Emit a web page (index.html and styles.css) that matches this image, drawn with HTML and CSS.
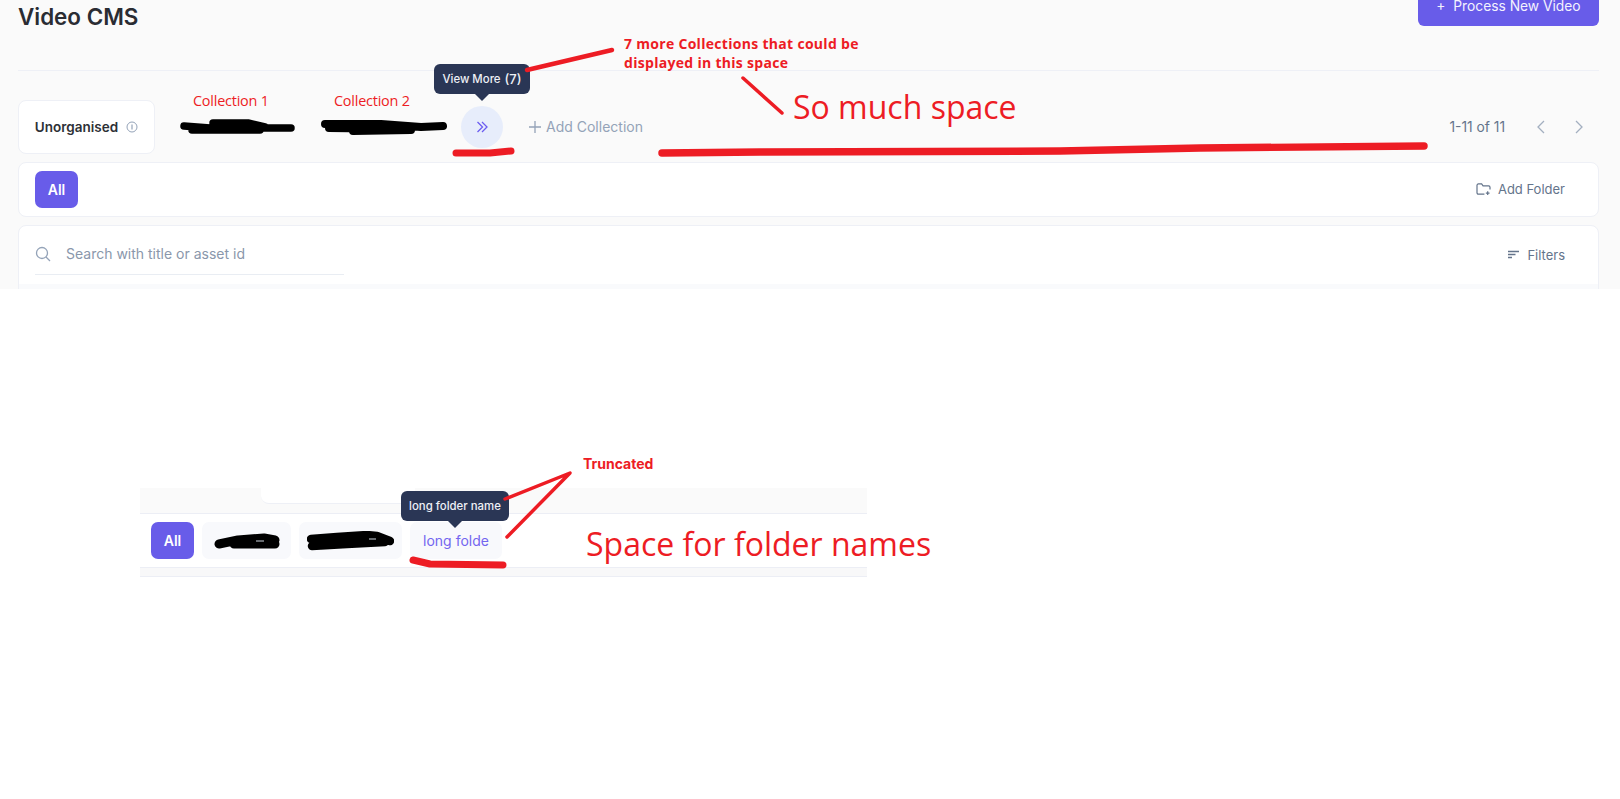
FILE: index.html
```html
<!DOCTYPE html>
<html lang="en">
<head>
    <meta charset="UTF-8">
    <meta name="viewport" content="width=device-width, initial-scale=1.0">
    <title>Video CMS</title>
    <link rel="stylesheet" href="styles.css">
</head>
<body>

    <div class="panel">
        <div class="page-head">
            <h1>Video CMS</h1>
            <button class="btn-primary">+&nbsp; Process New Video</button>
        </div>

        <div class="collections">
            <div class="tab-card">
                Unorganised
                <svg class="info" viewBox="0 0 12 12" width="12" height="12"><circle cx="6" cy="6" r="5" fill="none" stroke="#94a3b8"/><path d="M6 3.5v5" stroke="#94a3b8" stroke-width="1.2"/></svg>
            </div>
            <div class="tab tab-one"><svg class="scribble" width="115" height="16" viewBox="0 0 115 16"><path d="M4 7L30 9L111 9M33 4L68 4L85 8M12 11L80 11" fill="none" stroke="#000" stroke-width="7.500" stroke-linecap="round" stroke-linejoin="round"/></svg></div>
            <div class="tab tab-two"><svg class="scribble" width="126" height="16" viewBox="0 0 126 16"><path d="M4 4L60 4L100 7L122 6M8 8L90 9M32 11L90 10" fill="none" stroke="#000" stroke-width="8" stroke-linecap="round" stroke-linejoin="round"/></svg></div>
            <div class="more">
                <span class="tooltip tooltip-more">View More <b>(7)</b></span>
                <svg viewBox="0 0 14 14" width="14" height="14"><path d="M2.5 2l5 5-5 5M7 2l5 5-5 5" fill="none" stroke="#6b5cf0" stroke-width="1.3"/></svg>
            </div>
            <div class="add-collection">
                <svg viewBox="0 0 12 12" width="12" height="12"><path d="M6 0v12M0 6h12" stroke="#94a3b8" stroke-width="1.300"/></svg>
                Add Collection
            </div>
            <div class="pager">
                <span>1-11 of 11</span>
                <svg viewBox="0 0 10 16" width="10" height="16"><path d="M8 2L2 8l6 6" fill="none" stroke="#a3afc0" stroke-width="1.300"/></svg>
                <svg viewBox="0 0 10 16" width="10" height="16"><path d="M2 2l6 6-6 6" fill="none" stroke="#a3afc0" stroke-width="1.300"/></svg>
            </div>
        </div>

        <div class="folders">
            <button class="chip-all">All</button>
            <div class="link-btn">
                <svg viewBox="0 0 16 14" width="15" height="13"><path d="M9 12H2.500A1.500 1.500 0 0 1 1 10.500V2.500A1.500 1.500 0 0 1 2.500 1H6l1.500 2h6A1.500 1.500 0 0 1 15 4.500V7M12.500 9v4M10.500 11h4" fill="none" stroke="#64748b" stroke-width="1.300"/></svg>
                Add Folder
            </div>
        </div>

        <div class="search-card">
            <div class="search-row">
                <div class="search">
                    <svg viewBox="0 0 16 16" width="16" height="16"><circle cx="7" cy="7" r="5.500" fill="none" stroke="#94a3b8" stroke-width="1.300"/><path d="M11 11l4 4" stroke="#94a3b8" stroke-width="1.300"/></svg>
                    <span>Search with title or asset id</span>
                </div>
                <div class="link-btn">
                    <svg viewBox="0 0 12 10" width="12" height="10"><path d="M0 1.500h11M0 4.500h7.500M0 7.500h4" stroke="#64748b" stroke-width="1.300"/></svg>
                    Filters
                </div>
            </div>
            <div class="search-foot"></div>
        </div>
    </div>

    <div class="panel-small">
        <div class="small-top"><div class="small-card"></div></div>
        <div class="small-row">
            <button class="chip-all">All</button>
            <div class="chip chip-one"><svg class="scribble" width="66" height="16" viewBox="0 0 66 16"><path d="M5 11L24 7L50 5L61 7M20 11L61 11" fill="none" stroke="#000" stroke-width="9" stroke-linecap="round" stroke-linejoin="round"/><path d="M42 8h8" stroke="#8a8f96" stroke-width="1.500"/></svg></div>
            <div class="chip chip-two"><svg class="scribble" width="87" height="20" viewBox="0 0 87 20"><path d="M4 8L30 6L60 4L70 5L83 10M5 15L40 13L78 11" fill="none" stroke="#000" stroke-width="8.500" stroke-linecap="round" stroke-linejoin="round"/><path d="M62 8h7" stroke="#8a8f96" stroke-width="1.500"/></svg></div>
            <div class="chip chip-long">
                <span class="tooltip tooltip-folder">long folder name</span>
                long folde
            </div>
        </div>
        <div class="small-foot"></div>
    </div>

    <!-- anotaciones encima de la captura -->
    <svg class="strokes" viewBox="0 0 1620 799" width="1620" height="799">
        <g fill="none" stroke="#ed1c24" stroke-linecap="round" stroke-linejoin="round">
            <path d="M527 70L612 50" stroke-width="4.500"/>
            <path d="M743 78L782 113" stroke-width="3.500"/>
            <path d="M456 153L490 153L511 151" stroke-width="7"/>
            <path d="M662 153L760 152L1060 151L1200 148L1424 146" stroke-width="7.500"/>
            <path d="M505 499L570 473L507 537" stroke-width="3.500"/>
            <path d="M413 560L430 564L503 565" stroke-width="7"/>
        </g>
    </svg>
    <span class="note note-c1">Collection 1</span>
    <span class="note note-c2">Collection 2</span>
    <span class="note note-more">7 more Collections that could be<br>displayed in this space</span>
    <span class="note note-space">So much space</span>
    <span class="note note-trunc">Truncated</span>
    <span class="note note-folder">Space for folder names</span>

</body>
</html>
```

FILE: styles.css
```css
body {
    font-family: Inter, "Liberation Sans", sans-serif;
    background-color: #fff;
    color: #1f2430;
    margin: 0;
    width: 1620px;
    height: 799px;
    overflow: hidden;
    position: relative;
}

button {
    font-family: inherit;
    border: none;
    cursor: pointer;
}

.panel {
    background-color: #fafafa;
    height: 289px;
    padding: 0 21px 0 18px;
    box-sizing: border-box;
    overflow: hidden;
}

.page-head {
    display: flex;
    justify-content: space-between;
    height: 70px;
    border-bottom: 1px solid #eef0f6;
}

.page-head h1 {
    font-size: 22.400px;
    font-weight: 600;
    line-height: 34px;
    margin: 0;
    color: #2a2c33;
}

.btn-primary {
    background-color: #685ce9;
    color: #f3f2fe;
    font-size: 13.800px;
    font-weight: 400;
    width: 181px;
    height: 40px;
    margin-top: -14px;
    border-radius: 6px;
}

.collections {
    display: flex;
    align-items: center;
    height: 54px;
    margin-top: 29px;
}

.tab-card {
    display: flex;
    align-items: center;
    justify-content: center;
    gap: 8px;
    width: 137px;
    height: 54px;
    box-sizing: border-box;
    background-color: #fff;
    border: 1px solid #eef0f6;
    border-radius: 8px;
    font-size: 13.500px;
    font-weight: 600;
    color: #2d3036;
}

.info {
    flex: none;
}

.tab {
    display: flex;
    align-items: center;
    height: 16px;
}

.tab-one {
    margin-left: 25px;
}

.tab-two {
    margin-left: 26px;
    margin-top: 2px;
}

.more {
    position: relative;
    display: flex;
    align-items: center;
    justify-content: center;
    width: 42px;
    height: 42px;
    margin-left: 14px;
    border-radius: 50%;
    background-color: #e7edfb;
}

.tooltip {
    position: absolute;
    background-color: #2a3655;
    color: #eef0f6;
    font-size: 11.400px;
    font-weight: 500;
    border-radius: 6px;
    white-space: nowrap;
    box-sizing: border-box;
    display: flex;
    align-items: center;
    justify-content: center;
}

.tooltip::after {
    content: "";
    position: absolute;
    bottom: -7px;
    border-left: 7px solid transparent;
    border-right: 7px solid transparent;
    border-top: 7px solid #2a3655;
}

.tooltip-more {
    left: -27px;
    top: -42px;
    width: 96px;
    height: 30px;
    gap: 4px;
}

.tooltip-more b {
    font-size: 13px;
    font-weight: 500;
}

.add-collection {
    display: flex;
    align-items: center;
    gap: 5px;
    margin-left: 26px;
    padding-bottom: 1px;
    font-size: 14px;
    color: #94a3b8;
}

.pager {
    margin-left: auto;
    display: flex;
    align-items: center;
    font-size: 13.800px;
    color: #64748b;
    gap: 28px;
    padding-right: 15px;
    padding-bottom: 1px;
}

.pager span {
    margin-right: 3px;
}

.folders {
    display: flex;
    align-items: center;
    justify-content: space-between;
    height: 55px;
    box-sizing: border-box;
    margin-top: 8px;
    padding: 0 33px 0 16px;
    background-color: #fff;
    border: 1px solid #eef0f6;
    border-radius: 8px;
}

.folders .link-btn {
    margin-top: -1px;
}

.chip-all {
    background-color: #685ce9;
    color: #fff;
    font-size: 14px;
    font-weight: 600;
    width: 43px;
    height: 37px;
    border-radius: 7px;
}

.link-btn {
    display: flex;
    align-items: center;
    gap: 7px;
    font-size: 13px;
    color: #64748b;
}

.search-card {
    margin-top: 8px;
    background-color: #fff;
    border: 1px solid #eef0f6;
    border-radius: 8px 8px 0 0;
    height: 81px;
    box-sizing: border-box;
}

.search-row {
    display: flex;
    justify-content: space-between;
    padding: 0 33px 0 16px;
    height: 58px;
}

.search {
    display: flex;
    align-items: center;
    gap: 15px;
    width: 309px;
    height: 41px;
    padding-top: 7px;
    border-bottom: 1px solid #e9edf3;
    font-size: 14px;
    color: #8a97ab;
}

.search-foot {
    height: 6px;
    background-color: #f9fafc;
}

.panel-small {
    width: 727px;
    height: 89px;
    margin: 199px 0 0 140px;
    background-color: #fafafa;
}

.small-top {
    height: 25px;
    border-bottom: 1px solid #eceef5;
}

.small-card {
    width: 154px;
    height: 16px;
    margin-left: 121px;
    background-color: #fff;
    border-radius: 0 0 8px 8px;
    border-bottom: 1px solid #eef0f6;
    box-sizing: border-box;
}

.small-row {
    display: flex;
    align-items: center;
    gap: 8px;
    height: 53px;
    padding-left: 11px;
    background-color: #fff;
}

.chip {
    position: relative;
    display: flex;
    align-items: center;
    justify-content: center;
    height: 37px;
    border-radius: 7px;
    background-color: #f8f9fc;
    font-size: 14px;
    color: #7366f0;
}

.chip-one {
    width: 89px;
}

.chip-two {
    width: 103px;
}

.chip-long {
    width: 92px;
}

.tooltip-folder {
    left: -9px;
    top: -31px;
    width: 108px;
    height: 30px;
}

.small-foot {
    height: 8px;
    border-top: 1px solid #eceef5;
    border-bottom: 1px solid #eceef5;
    background-color: #f8f8f9;
}

/* anotaciones */
.strokes {
    position: absolute;
    left: 0;
    top: 0;
    pointer-events: none;
}

.note {
    position: absolute;
    color: #ed1c24;
    font-family: "Open Sans", sans-serif;
    white-space: nowrap;
}

.note-c1, .note-c2 {
    top: 92px;
    font-size: 14.400px;
    line-height: 18px;
    letter-spacing: -0.200px;
}

.note-c1 {
    left: 193px;
}

.note-c2 {
    left: 334px;
}

.note-more {
    left: 624px;
    top: 34px;
    font-size: 14px;
    font-weight: 700;
    line-height: 19px;
    letter-spacing: 0.300px;
}

.note-space {
    left: 793px;
    top: 87px;
    font-size: 32px;
    line-height: 40px;
}

.note-trunc {
    left: 583px;
    top: 455px;
    font-family: Inter, sans-serif;
    font-size: 14px;
    font-weight: 700;
    line-height: 18px;
}

.note-folder {
    left: 586px;
    top: 524px;
    font-size: 32px;
    line-height: 40px;
}
```
